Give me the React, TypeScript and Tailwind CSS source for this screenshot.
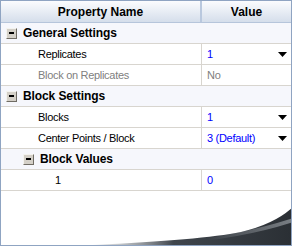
import React from 'react';

type Row =
  | { kind: 'group'; label: string; indent: number }
  | { kind: 'prop'; label: string; value: string; indent: number; dim?: boolean; dropdown?: boolean };

const ROWS: Row[] = [
  { kind: 'group', label: 'General Settings', indent: 0 },
  { kind: 'prop', label: 'Replicates', value: '1', indent: 37, dropdown: true },
  { kind: 'prop', label: 'Block on Replicates', value: 'No', indent: 37, dim: true },
  { kind: 'group', label: 'Block Settings', indent: 0 },
  { kind: 'prop', label: 'Blocks', value: '1', indent: 37, dropdown: true },
  { kind: 'prop', label: 'Center Points / Block', value: '3 (Default)', indent: 37, dropdown: true },
  { kind: 'group', label: 'Block Values', indent: 17 },
  { kind: 'prop', label: '1', value: '0', indent: 54 },
];

function MinusBox() {
  return (
    <span className="flex items-center justify-center w-[11px] h-[11px] bg-[#d4d0c8] border border-t-[#f4f3ef] border-l-[#f4f3ef] border-b-[#706c64] border-r-[#706c64] shrink-0">
      <span className="block w-[5px] h-[2px] bg-black" />
    </span>
  );
}

function Caret() {
  return (
    <svg width="9" height="5" viewBox="0 0 9 5" className="shrink-0">
      <path d="M0 0H9L4.5 5Z" fill="#000" />
    </svg>
  );
}

export default function App() {
  return (
    <div
      className="relative w-[292px] h-[246px] overflow-hidden bg-white border border-[#8fa4c2] text-[11px] text-black"
      style={{ fontFamily: '"Liberation Sans", Arial, sans-serif' }}
    >
      {/* header */}
      <div className="flex h-[22px] border-b border-[#b6c5db] bg-gradient-to-b from-[#fbfcfe] to-[#d5deeb] font-bold text-[12px]">
        <div className="w-[201px] flex items-center justify-center border-r-2 border-[#b9c8de]">Property Name</div>
        <div className="flex-1 flex items-center justify-center">Value</div>
      </div>

      {ROWS.map((r, i) =>
        r.kind === 'group' ? (
          <div key={i} className="flex items-center h-[21px] bg-[#f6f7fc] border-b border-[#d8d5cf] font-bold text-[12px] tracking-[-0.1px]">
            <div className="flex items-center gap-[6px]" style={{ paddingLeft: 5 + r.indent }}>
              <MinusBox />
              <span>{r.label}</span>
            </div>
          </div>
        ) : (
          <div key={i} className="flex h-[21px] border-b border-[#d8d5cf] tracking-[-0.3px]">
            <div
              className={`w-[201px] flex items-center border-r border-[#d8d5cf] ${r.dim ? 'text-[#808080]' : ''}`}
              style={{ paddingLeft: r.indent }}
            >
              {r.label}
            </div>
            <div className={`flex-1 flex items-center justify-between pl-[5px] pr-[4px] ${r.dim ? 'text-[#808080]' : 'text-[#0000ff]'}`}>
              <span>{r.value}</span>
              {r.dropdown && <Caret />}
            </div>
          </div>
        ),
      )}

      {/* swoosh decoration */}
      <svg className="absolute left-0 bottom-0" width="292" height="40" viewBox="0 0 292 40">
        <defs>
          <linearGradient id="sw" x1="0" y1="0" x2="1" y2="0">
            <stop offset="0" stopColor="#9aa0a6" stopOpacity="0.2" />
            <stop offset="0.4" stopColor="#40464d" />
            <stop offset="1" stopColor="#2a2f34" />
          </linearGradient>
          <linearGradient id="hl" x1="0" y1="0" x2="1" y2="0">
            <stop offset="0.3" stopColor="#c9ced3" stopOpacity="0" />
            <stop offset="1" stopColor="#aeb4ba" />
          </linearGradient>
        </defs>
        <path d="M92 40 Q200 35 240 27 Q274 19 292 2 L292 40 Z" fill="url(#sw)" />
        <path d="M170 38 Q240 30 292 13 L292 17 Q240 34 170 39 Z" fill="url(#hl)" opacity="0.6" />
      </svg>
    </div>
  );
}
